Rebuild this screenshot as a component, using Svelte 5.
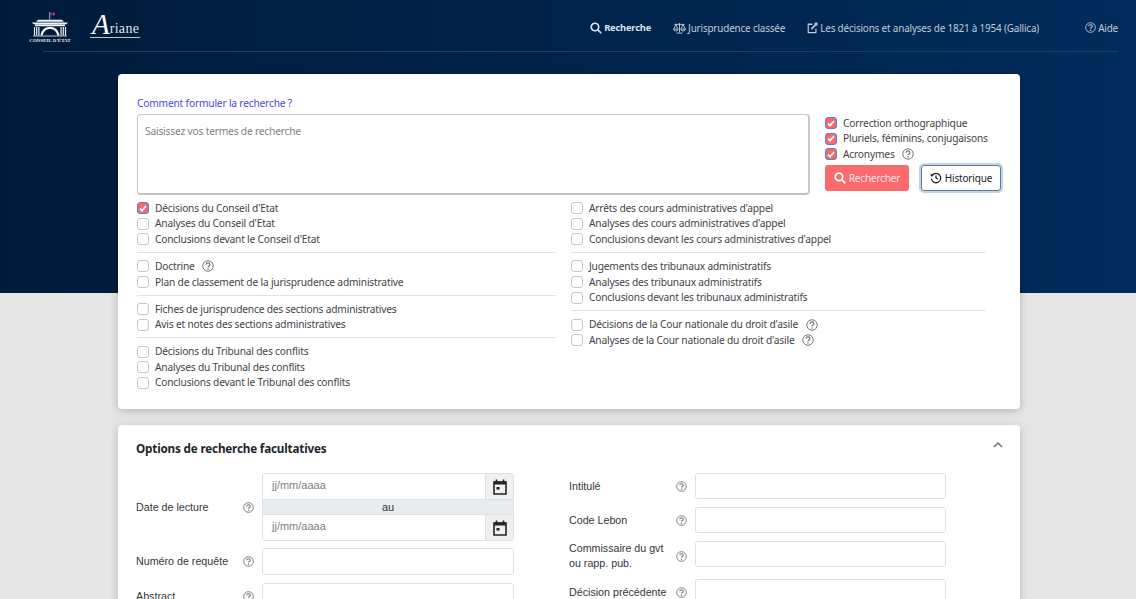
<script>
  const left = [
    [{ t: 'Décisions du Conseil d\'Etat', c: true }, { t: 'Analyses du Conseil d\'Etat' }, { t: 'Conclusions devant le Conseil d\'Etat' }],
    [{ t: 'Doctrine', h: true }, { t: 'Plan de classement de la jurisprudence administrative' }],
    [{ t: 'Fiches de jurisprudence des sections administratives' }, { t: 'Avis et notes des sections administratives' }],
    [{ t: 'Décisions du Tribunal des conflits' }, { t: 'Analyses du Tribunal des conflits' }, { t: 'Conclusions devant le Tribunal des conflits' }]
  ];
  const right = [
    [{ t: 'Arrêts des cours administratives d\'appel' }, { t: 'Analyses des cours administratives d\'appel' }, { t: 'Conclusions devant les cours administratives d\'appel' }],
    [{ t: 'Jugements des tribunaux administratifs' }, { t: 'Analyses des tribunaux administratifs' }, { t: 'Conclusions devant les tribunaux administratifs' }],
    [{ t: 'Décisions de la Cour nationale du droit d\'asile', h: true }, { t: 'Analyses de la Cour nationale du droit d\'asile', h: true }]
  ];
  const options = [
    { t: 'Correction orthographique' },
    { t: 'Pluriels, féminins, conjugaisons' },
    { t: 'Acronymes', h: true }
  ];
</script>

{#snippet help(size = 12)}
  <svg class="help" width={size} height={size} viewBox="0 0 16 16" fill="none" stroke="currentColor" stroke-width="1.3">
    <circle cx="8" cy="8" r="7" />
    <path d="M5.4 6.2c0-1.5 1.1-2.3 2.6-2.3s2.6.9 2.6 2.1c0 2-2.6 1.8-2.6 3.6" stroke-width="1.6" />
    <circle cx="8" cy="12" r="1.05" fill="currentColor" stroke="none" />
  </svg>
{/snippet}

{#snippet check(item)}
  <div class="check">
    <span class="box" class:on={item.c}>
      {#if item.c}
        <svg width="8" height="7" viewBox="0 0 8 7"><path d="M1 3.6 3 5.6 7 1.2" fill="none" stroke="#fff" stroke-width="1.8" /></svg>
      {/if}
    </span>
    <span class="lbl">{item.t}</span>
    {#if item.h}<span class="hw">{@render help(12)}</span>{/if}
  </div>
{/snippet}

{#snippet cal()}
  <span class="cal">
    <svg width="14" height="16" viewBox="0 0 14 16">
      <path d="M1 3h12v12H1z" fill="none" stroke="#212529" stroke-width="1.6" />
      <path d="M1 2.5h12v3H1z" fill="#212529" />
      <path d="M3.5 0.5v3M10.5 0.5v3" stroke="#212529" stroke-width="1.6" />
      <rect x="3.5" y="8" width="3" height="2.6" fill="#212529" />
    </svg>
  </span>
{/snippet}

{#snippet row(label, two = false)}
  <div class="frow" class:tall={two}>
    <span class="flabel">{@html label}</span>
    <span class="fq">{@render help(11)}</span>
    <span class="input"></span>
  </div>
{/snippet}

<div class="page">
  <header>
    <div class="logos">
      <div class="ce">
        <svg width="40" height="28" viewBox="0 0 40 28">
          <path d="M5 12.5h30v1.8H5zM2 10.6h36l-1.5 1.6H3.5zM6 9.8l2-2h24l2 2z" fill="#eef1f5" />
          <path d="M19.7 0v8" stroke="#cfd6e0" stroke-width=".8" />
          <rect x="19.9" y="0.5" width="2.6" height="2.8" fill="#2b4aa0" />
          <rect x="22.5" y="0.7" width="2.4" height="2.6" fill="#d8324a" />
          <path d="M4.5 15v8.5M6.7 15v8.5M8.9 15v8.5M31.1 15v8.5M33.3 15v8.5M35.5 15v8.5" stroke="#eef1f5" stroke-width="1.2" />
          <path d="M10.5 23.5c1-6 5-8.700 9.500-8.700s8.500 2.700 9.500 8.700h-2.200c-1-4.500-3.800-6.500-7.300-6.500s-6.300 2-7.300 6.500z" fill="#eef1f5" />
          <path d="M3 24h34" stroke="#eef1f5" stroke-width=".8" />
        </svg>
        <span class="cet">CONSEIL D'ÉTAT</span>
      </div>
      <div class="ar">
        <span class="ar-a">A</span><span class="ar-t">riane</span>
      </div>
    </div>
    <nav>
      <a class="active"><svg width="12" height="12" viewBox="0 0 16 16" fill="none" stroke="currentColor" stroke-width="2.2"><circle cx="6.6" cy="6.6" r="5" /><path d="M10.4 10.4 15 15" /></svg>Recherche</a>
      <a><svg width="13" height="12" viewBox="0 0 18 16" fill="none" stroke="currentColor" stroke-width="1.3"><path d="M9 1v13M5 15h8M2 3h14M4 3 1.200 9.500M4 3l2.800 6.500M14 3l-2.800 6.500M14 3l2.800 6.500" /><path d="M.8 9.500h6.400a3.200 2.600 0 0 1-6.400 0zM10.800 9.500h6.400a3.200 2.600 0 0 1-6.400 0z" /></svg>Jurisprudence classée</a>
      <a><svg width="11" height="12" viewBox="0 0 16 16" preserveAspectRatio="none" fill="none" stroke="currentColor" stroke-width="1.7"><path d="M13 9v5.200H1.800V3H8" /><path d="M6.500 9.500 14.500 1.500" stroke-width="2.400" /><path d="M10 1h5v5" fill="currentColor" stroke="none" /></svg>Les décisions et analyses de 1821 à 1954 (Gallica)</a>
      <a class="aide">{@render help(11)}Aide</a>
    </nav>
  </header>

  <section class="card main">
    <a class="how">Comment formuler la recherche ?</a>
    <div class="top">
      <div class="ta">Saisissez vos termes de recherche</div>
      <div class="side">
        {#each options as o}
          {@render check({ ...o, c: true })}
        {/each}
        <div class="btns">
          <span class="btn red"><svg width="12" height="12" viewBox="0 0 16 16" fill="none" stroke="#fff" stroke-width="2.4"><circle cx="6.6" cy="6.6" r="5" /><path d="M10.4 10.4 15 15" /></svg>Rechercher</span>
          <span class="btn hist"><svg width="12" height="12" viewBox="0 0 16 16" fill="none" stroke="#212529" stroke-width="1.7"><path d="M3 4.200A6.300 6.300 0 1 1 1.800 9" /><path d="M1 1.500v4.200h4.200" fill="#212529" stroke="none" /><path d="M8 4.500V8l2.500 1.600" /></svg>Historique</span>
        </div>
      </div>
    </div>
    <div class="cols">
      <div class="col">
        {#each left as g, i}
          {#if i}<hr />{/if}
          {#each g as item}{@render check(item)}{/each}
        {/each}
      </div>
      <div class="col rc">
        {#each right as g, i}
          {#if i}<hr />{/if}
          {#each g as item}{@render check(item)}{/each}
        {/each}
      </div>
    </div>
  </section>

  <section class="card opts">
    <div class="ohead">
      <h2>Options de recherche facultatives</h2>
      <svg width="10" height="6" viewBox="0 0 10 6" fill="none" stroke="#6c757d" stroke-width="1.6"><path d="M1 5l4-4 4 4" /></svg>
    </div>
    <div class="ocols">
      <div class="ocol l">
        <div class="frow date">
          <span class="flabel">Date de lecture</span>
          <span class="fq">{@render help(11)}</span>
          <div class="dategroup">
            <div class="dline"><span class="dval">jj/mm/aaaa</span>{@render cal()}</div>
            <div class="au">au</div>
            <div class="dline"><span class="dval">jj/mm/aaaa</span>{@render cal()}</div>
          </div>
        </div>
        {@render row('Numéro de requête')}
        {@render row('Abstract')}
      </div>
      <div class="ocol r">
        {@render row('Intitulé')}
        {@render row('Code Lebon')}
        {@render row('Commissaire du gvt<br />ou rapp. pub.', true)}
        {@render row('Décision précédente')}
      </div>
    </div>
  </section>
</div>

<style>
  :global(body) {
    margin: 0;
    background: #e5e5e5;
    overflow: hidden;
  }
  .page {
    height: 599px;
    overflow: hidden;
    background:
      linear-gradient(90deg, #001b3a 0%, #002c5c 100%) 0 0 / 100% 293px no-repeat,
      #e5e5e5;
    font-family: "Noto Sans", "Open Sans", sans-serif;
    font-size: 10.2px;
    letter-spacing: -.18px;
    color: #3f4347;
  }
  header {
    height: 51px;
    margin: 0 18px 22px 43px;
    border-bottom: 1px solid #1d3d62;
    display: flex;
    justify-content: space-between;
  }
  .logos {
    display: flex;
    margin-left: -13px;
    gap: 20px;
    padding-top: 12px;
    letter-spacing: 0;
  }
  .ce {
    width: 40px;
    display: flex;
    flex-direction: column;
    align-items: center;
  }
  .ce svg { display: block; }
  .cet {
    font-family: "Liberation Serif", serif;
    font-size: 5px;
    line-height: 6px;
    font-weight: 700;
    color: #e8edf3;
    white-space: nowrap;
    margin-top: -2px;
  }
  .ar {
    display: flex;
    align-items: flex-end;
    height: 24px;
    border-bottom: 1px solid #b9c3d0;
    padding-bottom: 1px;
    color: #dfe5ec;
    width: 50px;
  }
  .ar-a {
    font-family: "Liberation Serif", serif;
    font-style: italic;
    font-size: 29px;
    line-height: 24px;
    color: #fff;
    margin-left: 2px;
  }
  .ar-t {
    font-family: "Liberation Serif", serif;
    font-size: 14px;
    line-height: 15px;
    letter-spacing: .3px;
  }
  nav {
    display: flex;
    align-items: center;
    height: 55px;
    color: #c3ccd7;
    font-size: 9.9px;
    letter-spacing: -.16px;
  }
  nav a {
    display: flex;
    align-items: center;
    gap: 2px;
    margin-left: 22px;
    white-space: nowrap;
  }
  nav a.active { font-weight: 700; color: #dfe4ea; font-size: 9.3px; }
  nav a.aide { margin-left: 46px; }
  .card {
    background: #fff;
    border-radius: 4px;
    box-shadow: 0 2px 8px rgba(0, 0, 0, .2);
    margin: 0 116px 0 118px;
  }
  .main {
    height: 335px;
    box-sizing: border-box;
    padding: 22px 19px 0;
    margin-bottom: 16px;
  }
  .how {
    display: block;
    color: #4a45ee;
    line-height: 15px;
    margin-bottom: 3px;
  }
  .top {
    display: flex;
    gap: 15px;
  }
  .ta {
    width: 673px;
    height: 81px;
    box-sizing: border-box;
    border: 1px solid #c8c8c8;
    border-bottom: 2px solid #c0c0c0;
    border-right: 2px solid #c8c8c8;
    border-radius: 4px;
    padding: 8.5px 7px;
    color: #7a7f85;
    line-height: 15px;
  }
  .side { width: 176px; padding-top: 1.5px; }
  .check {
    display: flex;
    align-items: center;
    height: 15.6px;
    white-space: nowrap;
  }
  .box {
    width: 10px;
    height: 10px;
    border: 1px solid #c4c8cc;
    border-radius: 3px;
    margin-right: 6px;
    display: flex;
    align-items: center;
    justify-content: center;
    flex: none;
  }
  .box.on {
    background: #f8676b;
    border-color: #4d86d9;
  }
  .lbl { line-height: 15px; }
  .hw {
    display: inline-flex;
    margin-left: 7px;
    color: #6e7276;
  }
  .rc .hw { margin-left: 8px; }
  .help { display: block; }
  .btns {
    display: flex;
    gap: 12px;
    margin-top: 2.5px;
  }
  .btn {
    display: flex;
    align-items: center;
    justify-content: center;
    gap: 3px;
    height: 26px;
    box-sizing: border-box;
    border-radius: 3px;
    white-space: nowrap;
    font-size: 10px;
  }
  .red {
    width: 84px;
    background: #fb6a6d;
    color: #ffe4e4;
  }
  .hist {
    width: 80px;
    border: 1px solid #6c757d;
    box-shadow: 0 0 0 2px #bcd6f6;
    color: #212529;
  }
  .cols {
    display: flex;
    gap: 15px;
    margin-top: 5.5px;
  }
  .col { width: 419px; }
  .rc { width: 415px; }
  hr {
    border: none;
    border-top: 1px solid #e2e3e5;
    margin: 5px 0 5.4px;
  }
  .opts {
    height: 260px;
    padding: 0 18px;
  }
  .ohead {
    height: 48px;
    box-sizing: border-box;
    padding-bottom: 2px;
    display: flex;
    align-items: center;
    justify-content: space-between;
  }
  .ohead svg { margin-top: -6px; margin-right: -1px; }
  h2 {
    margin: 0;
    font-size: 11.7px;
    letter-spacing: -.18px;
    font-weight: 700;
    color: #212529;
  }
  .ocols {
    display: flex;
    font-family: "Liberation Sans", sans-serif;
    font-size: 10.7px;
    letter-spacing: 0;
    color: #33373b;
  }
  .ocol.l { width: 433px; }
  .frow {
    display: grid;
    grid-template-columns: 107px 19px 252px;
    align-items: center;
    margin-bottom: 8px;
  }
  .l .frow.date { margin-bottom: 7px; }
  .r .frow { grid-template-columns: 107px 19px 251px; }
  .flabel { line-height: 15px; white-space: nowrap; }
  .fq { color: #6e7276; }
  .input {
    display: block;
    height: 27px;
    border: 1px solid #dee2e6;
    border-radius: 3px;
    box-sizing: border-box;
  }
  .r .input { height: 26px; }
  .tall .input { align-self: start; }
  .dategroup {
    border: 1px solid #dee2e6;
    border-radius: 3px;
    overflow: hidden;
    font-size: 11px;
  }
  .dline {
    display: flex;
    height: 25px;
    align-items: stretch;
  }
  .dval {
    flex: 1;
    padding-left: 9px;
    line-height: 23px;
    color: #7b8085;
  }
  .cal {
    width: 28px;
    box-sizing: border-box;
    background: #f0f0f0;
    border-left: 1px solid #dee2e6;
    display: flex;
    align-items: center;
    justify-content: center;
  }
  .au {
    height: 14px;
    line-height: 14px;
    background: #e9ecef;
    text-align: center;
    border-top: 1px solid #dee2e6;
    border-bottom: 1px solid #dee2e6;
  }
</style>
